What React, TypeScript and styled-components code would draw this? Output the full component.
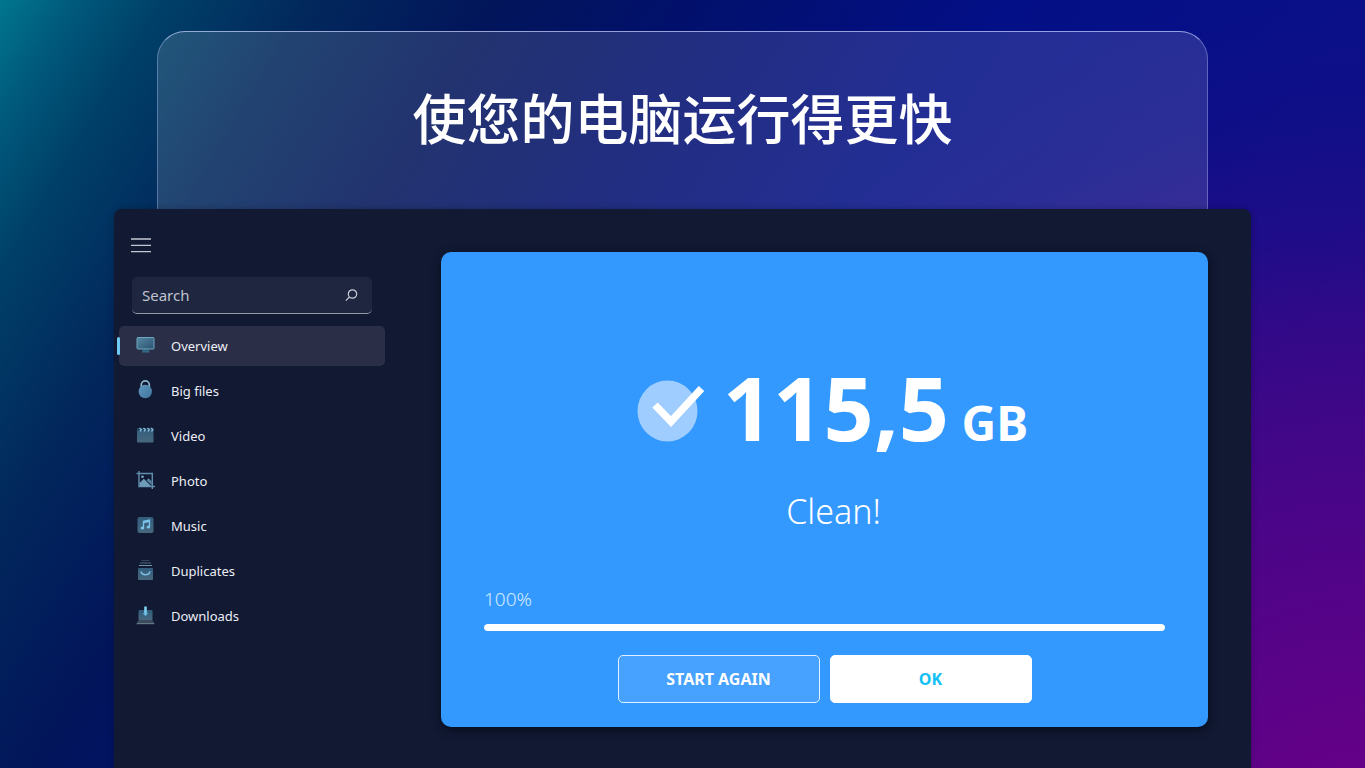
import React from 'react';
import styled, { createGlobalStyle } from 'styled-components';

const uiFont = '"Noto Sans", "Open Sans", "Noto Sans CJK SC", sans-serif';

const GlobalStyle = createGlobalStyle`
  * { box-sizing: border-box; }
  html, body, #root { height: 100%; }
  body { margin: 0; font-family: ${uiFont}; color: #fff; }
`;

const Page = styled.main`
  display: flex;
  flex-direction: column;
  min-height: 100vh;
  padding-top: 31px;
  background:
    radial-gradient(ellipse 60% 115% at 100% 115%,
      rgba(104, 0, 136, 0.96) 13%,
      rgba(104, 0, 136, 0.79) 32%,
      rgba(104, 0, 136, 0.62) 49%,
      rgba(104, 0, 136, 0.43) 63%,
      rgba(104, 0, 136, 0.22) 74%,
      rgba(104, 0, 136, 0.06) 87%,
      rgba(104, 0, 136, 0) 100%),
    linear-gradient(121deg,
      #00768e 0%, #005a7c 4%, #004068 9%, #02285c 17%,
      #02155a 27%, #02106c 38%, #030f86 55%, #0a1088 75%);
`;

const Glass = styled.header`
  width: 77%;
  height: 178px;
  margin: 0 auto;
  padding-bottom: 8px;
  display: flex;
  align-items: center;
  justify-content: center;
  border: 1px solid rgba(190, 205, 255, 0.36);
  border-top-color: rgba(200, 212, 255, 0.7);
  border-bottom: 0;
  border-radius: 28px 28px 0 0;
  background: rgba(255, 255, 255, 0.13);
`;

const Title = styled.h1`
  margin: 0;
  font: 500 54px/80px "Noto Sans CJK SC", sans-serif;
`;

const AppWindow = styled.div`
  flex: 1;
  width: calc(100% - 228px);
  margin: 0 auto;
  display: flex;
  background: #111933;
  border-radius: 8px 8px 0 0;
  box-shadow: 0 0 6px rgba(0, 0, 20, 0.25);
`;

const Sidebar = styled.aside`
  flex: 0 0 271px;
  padding: 24px 0 0 4px;
`;

const MenuButton = styled.button`
  display: block;
  margin: 0 0 20px 12px;
  padding: 4px 0;
  width: 22px;
  height: 24px;
  border: 0;
  background: none;
  color: #c3c7d3;
  svg { display: block; }
`;

const SearchBox = styled.label`
  display: flex;
  align-items: center;
  width: 240px;
  height: 37px;
  margin: 0 0 12px 14px;
  padding: 0 14px 0 10px;
  background: #1f263f;
  border-bottom: 1px solid #9499aa;
  border-radius: 5px;
  color: #c8ccd8;
`;

const SearchInput = styled.input`
  flex: 1;
  min-width: 0;
  padding: 0;
  border: 0;
  outline: 0;
  background: none;
  color: inherit;
  font: 15px/20px ${uiFont};
  &::placeholder { color: #bfc3cf; opacity: 1; }
`;

const NavList = styled.ul`
  margin: 0;
  padding: 0;
  list-style: none;
  display: grid;
  gap: 5px;
`;

const NavLink = styled.a<{ $active?: boolean }>`
  position: relative;
  display: flex;
  align-items: center;
  gap: 15px;
  height: 40px;
  padding-left: 17px;
  margin-left: 1px;
  border-radius: 5px;
  background: ${p => (p.$active ? '#2a2f47' : 'transparent')};
  color: #eceef5;
  font-size: 13px;
  line-height: 20px;
  text-decoration: none;
  &::before {
    content: '';
    display: ${p => (p.$active ? 'block' : 'none')};
    position: absolute;
    left: -2px;
    top: 11px;
    width: 3px;
    height: 18px;
    border-radius: 2px;
    background: #6ccaf5;
  }
`;

const Content = styled.section`
  flex: 1;
  display: flex;
  padding: 43px 43px 41px 56px;
`;

const Card = styled.div`
  flex: 1;
  display: flex;
  flex-direction: column;
  padding: 105px 43px 24px;
  border-radius: 10px;
  background: #3399ff;
  box-shadow: 0 3px 10px rgba(0, 0, 10, 0.55);
`;

const Result = styled.div`
  display: flex;
  justify-content: center;
  align-items: center;
  gap: 18px;
  padding-left: 16px;
`;

const CheckMark = styled.svg`
  margin-bottom: 8px;
`;

const Amount = styled.p`
  margin: 0;
  font-size: 88px;
  line-height: 100px;
  font-weight: 700;
`;

const Unit = styled.span`
  font-size: 48px;
`;

const Status = styled.p`
  margin: 13px 0 0 18px;
  text-align: center;
  font-size: 34px;
  line-height: 50px;
  font-weight: 300;
`;

const Percent = styled.label`
  margin-top: auto;
  font-size: 19px;
  line-height: 28px;
  font-weight: 300;
  color: #d3e9ff;
`;

const Progress = styled.progress`
  appearance: none;
  display: block;
  width: 100%;
  height: 7px;
  margin: 11px 0 24px;
  border: 0;
  border-radius: 4px;
  overflow: hidden;
  background: #66b2ff;
  &::-webkit-progress-bar { background: #66b2ff; }
  &::-webkit-progress-value { background: #fff; border-radius: 4px; }
`;

const Actions = styled.div`
  display: flex;
  justify-content: center;
  gap: 10px;
`;

const Button = styled.button<{ $primary?: boolean }>`
  width: 202px;
  height: 48px;
  border: 1px solid ${p => (p.$primary ? '#fff' : '#e2f1ff')};
  border-radius: 5px;
  background: ${p => (p.$primary ? '#fff' : '#47a1ff')};
  color: ${p => (p.$primary ? '#12c0f5' : '#fff')};
  font: 700 16px/20px ${uiFont};
`;

const IconBox = styled.svg`
  margin-bottom: 2px;
`;

const Icon = ({ children }: { children: React.ReactNode }) => (
  <IconBox width="20" height="24" viewBox="0 0 20 24" fill="none" aria-hidden="true">{children}</IconBox>
);

const icons = {
  overview: (
    <Icon>
      <path d="M7 16h5.500l1 3H6z" fill="#2f5f7d" />
      <rect x="1" y="4.500" width="17" height="11.500" rx="1" fill="url(#screen)" stroke="#6ea6bf" />
      <path d="M6 19h7.500" stroke="#39708e" />
    </Icon>
  ),
  big: (
    <Icon>
      <path d="M5.300 9.500V6.800a4 3.900 0 0 1 8 0V9.500" stroke="#8fb6cd" strokeWidth="1.700" />
      <circle cx="9.300" cy="13.500" r="6.700" fill="url(#weight)" />
    </Icon>
  ),
  video: (
    <Icon>
      <rect x="1" y="5" width="16.500" height="14.500" rx="1" fill="url(#steel)" />
      <rect x="1" y="5" width="16.500" height="2.500" fill="#22435e" />
      <path d="M3.500 5 5.300 6.700 4 8.500M7.500 5 9.300 6.700 8 8.500M11.500 5 13.300 6.700 12 8.500M15 5 16.800 6.700 15.500 8.500" stroke="#82b8d5" strokeWidth="1.300" />
    </Icon>
  ),
  photo: (
    <Icon>
      <path d="M3 3v15.500h16M.5 5.500h15.800V21" stroke="#628fad" strokeWidth="1.400" />
      <path d="m3.500 15 4.300-4.200 7.500 7.400H3.500z" fill="#6e9dba" />
      <path d="m10.500 12.300 2-2 3.200 3v4z" fill="#54819e" />
      <circle cx="6.500" cy="8.700" r="1.300" fill="#78a9c5" />
    </Icon>
  ),
  music: (
    <Icon>
      <rect x="1.500" y="4" width="16" height="16" rx="2" fill="url(#steel)" />
      <path d="M7.500 15V8.300l6-1.200v6.700M7.500 9.500l6-1.200" stroke="#7ec4ea" strokeWidth="1.300" />
      <ellipse cx="6.400" cy="15" rx="1.800" ry="1.500" fill="#7ec4ea" />
      <ellipse cx="12.400" cy="14" rx="1.800" ry="1.500" fill="#7ec4ea" />
    </Icon>
  ),
  duplicates: (
    <Icon>
      <path d="M5.500 2.500h8" stroke="#344558" />
      <path d="M4 5h11" stroke="#526b80" />
      <path d="M3 7.500h13" stroke="#7295aa" />
      <rect x="2" y="10" width="15" height="12" rx="1" fill="url(#steel)" />
      <path d="M5 13.300c.8 4.600 8.200 4.600 9 0" stroke="#7bbce0" strokeWidth="1.600" />
    </Icon>
  ),
  downloads: (
    <Icon>
      <rect x="2.500" y="7" width="14" height="10" rx="1" fill="url(#steel)" />
      <path d="M2.500 17h14l1.800 3.500H.7z" fill="#3b4b5b" />
      <path d="M.7 20.700h17.600" stroke="#718797" />
      <path d="M9.500 3.500v7" stroke="#7ccdf2" strokeWidth="2.600" />
      <path d="M6.800 10h5.400L9.500 13.300z" fill="#68b7df" />
    </Icon>
  ),
};

const items: { id: keyof typeof icons; label: string }[] = [
  { id: 'overview', label: 'Overview' },
  { id: 'big', label: 'Big files' },
  { id: 'video', label: 'Video' },
  { id: 'photo', label: 'Photo' },
  { id: 'music', label: 'Music' },
  { id: 'duplicates', label: 'Duplicates' },
  { id: 'downloads', label: 'Downloads' },
];

const Gradients = styled.svg`
  position: absolute;
  width: 0;
  height: 0;
`;

export default function App() {
  return (
    <Page>
      <GlobalStyle />
      <Gradients aria-hidden="true">
        <defs>
          <linearGradient id="screen" x1="0" y1="0" x2="1" y2="1">
            <stop offset="0" stopColor="#5488a4" /><stop offset="1" stopColor="#2b526f" />
          </linearGradient>
          <linearGradient id="weight" x1="0" y1="0" x2="1" y2="1">
            <stop offset="0" stopColor="#6097bd" /><stop offset="1" stopColor="#40759f" />
          </linearGradient>
          <linearGradient id="steel" x1="0" y1="0" x2="0" y2="1">
            <stop offset="0" stopColor="#315d7c" /><stop offset="1" stopColor="#48687e" />
          </linearGradient>
        </defs>
      </Gradients>
      <Glass><Title lang="zh-CN">使您的电脑运行得更快</Title></Glass>
      <AppWindow>
        <Sidebar>
          <MenuButton type="button" aria-label="Menu">
            <svg width="22" height="16" viewBox="0 0 22 16" stroke="currentColor" strokeWidth="1.300">
              <path d="M1 2h20M1 8.300h20M1 14.600h20" />
            </svg>
          </MenuButton>
          <SearchBox>
            <SearchInput type="text" placeholder="Search" aria-label="Search" />
            <svg width="13" height="14" viewBox="0 0 13 14" fill="none" stroke="currentColor" strokeWidth="1.200">
              <circle cx="7.500" cy="6" r="4.200" /><path d="M4.500 9 .8 12.700" />
            </svg>
          </SearchBox>
          <nav>
            <NavList>
              {items.map((item, i) => (
                <li key={item.id}>
                  <NavLink href="#" $active={i === 0}>{icons[item.id]}{item.label}</NavLink>
                </li>
              ))}
            </NavList>
          </nav>
        </Sidebar>
        <Content>
          <Card>
            <Result>
              <CheckMark width="68" height="62" viewBox="0 0 68 62" fill="none" aria-hidden="true">
                <ellipse cx="30.500" cy="31" rx="30" ry="30.500" fill="#9fcdff" />
                <path d="m18 25 16 16.500L64.500 8.500" stroke="#fff" strokeWidth="7.500" />
              </CheckMark>
              <Amount>115,5<Unit> GB</Unit></Amount>
            </Result>
            <Status>Clean!</Status>
            <Percent htmlFor="clean-progress">100%</Percent>
            <Progress id="clean-progress" value={100} max={100} />
            <Actions>
              <Button type="button">START AGAIN</Button>
              <Button type="button" $primary>OK</Button>
            </Actions>
          </Card>
        </Content>
      </AppWindow>
    </Page>
  );
}
